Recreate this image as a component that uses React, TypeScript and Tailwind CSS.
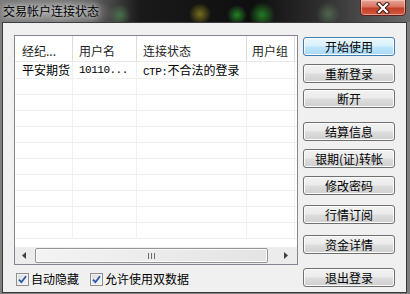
import React from "react";

const btnBase =
  "h-[19px] w-[92px] rounded-[3px] border flex items-center justify-center text-[12px] leading-[14px] text-black shadow-[inset_0_0_0_1px_#fbfbfb]";
const grayBtn =
  "border-[#707070] bg-[linear-gradient(#f2f2f2_0%,#ebebeb_48%,#dddddd_52%,#cfcfcf_100%)]";
const blueBtn =
  "border-[#3c7fb1] bg-[linear-gradient(#eaf6fd_0%,#d9f0fc_48%,#bee6fd_52%,#a7d9f5_100%)] shadow-[inset_0_0_0_1px_#c8e9fa]";

function Btn({ label, cls, primary }: { label: string; cls: string; primary?: boolean }) {
  return <div className={`${btnBase} ${primary ? blueBtn : grayBtn} ${cls}`}>{label}</div>;
}

function Check({ label, cls }: { label: string; cls: string }) {
  return (
    <div className={`flex items-center ${cls}`}>
      <div className="w-[13px] h-[13px] border border-[#8f8f8f] bg-[linear-gradient(135deg,#dcdcdc,#f6f6f6)] flex items-center justify-center shadow-[inset_0_0_0_1px_#f4f4f4]">
        <svg width="9" height="9" viewBox="0 0 9 9">
          <path d="M1 4.6 L3.4 7.2 L8 1.2" stroke="#2a55a8" strokeWidth="1.8" fill="none" />
        </svg>
      </div>
      <span className="ml-[2px] text-[12px] leading-[14px] text-black">{label}</span>
    </div>
  );
}

export default function App() {
  const rows = Array.from({ length: 10 });
  return (
    <div className="w-[410px] h-[294px] overflow-hidden bg-[#7e7e7e] flex flex-col font-['Noto_Sans_CJK_SC',sans-serif]">
      {/* title bar */}
      <div className="relative h-[22px] shrink-0 flex items-start bg-[radial-gradient(ellipse_60px_16px_at_55px_12px,rgba(190,190,190,0.55),transparent),radial-gradient(circle_at_120px_15px,rgba(90,160,90,0.55)_0,transparent_11px),radial-gradient(circle_at_200px_14px,rgba(150,140,30,0.75)_0,transparent_11px),radial-gradient(circle_at_237px_15px,rgba(40,150,40,0.85)_0,transparent_10px),radial-gradient(circle_at_262px_15px,rgba(40,140,40,0.85)_0,transparent_13px),radial-gradient(circle_at_328px_14px,rgba(110,150,110,0.5)_0,transparent_12px),linear-gradient(90deg,#7c7c7c_0%,#656565_22%,#1a1a1a_34%,#0e0e0e_62%,#2e2e2e_78%,#6a6a6a_100%)]">
        <span className="ml-[3px] mt-[4px] text-[12px] leading-[14px] text-black [text-shadow:0_0_4px_#ddd,0_0_8px_#ccc]">
          交易帐户连接状态
        </span>
        <div className="absolute right-[4px] top-[-1px] w-[46px] h-[17px] rounded-b-[4px] border border-[#5e2119] bg-[linear-gradient(#e9a799_0%,#d9735f_45%,#c2402a_55%,#d4583f_100%)] shadow-[inset_0_0_0_1px_rgba(255,220,210,0.5)] flex items-center justify-center">
          <svg width="14" height="12" viewBox="0 0 14 12">
            <path d="M3 2 L11 10 M11 2 L3 10" stroke="#3a1a14" strokeWidth="4.2" strokeLinecap="square" />
            <path d="M3 2 L11 10 M11 2 L3 10" stroke="#ffffff" strokeWidth="2.2" strokeLinecap="square" />
          </svg>
        </div>
      </div>

      {/* body */}
      <div className="ml-[2px] mr-[3px] h-[271px] shrink-0 border border-[#3a3a3a] bg-[#f0f0f0] flex pl-[11px] pt-[12px]">
        {/* left column */}
        <div className="flex flex-col w-[284px]">
          <div className="h-[230px] border border-[#828790] bg-white flex flex-col">
            {/* header */}
            <div className="h-[26px] flex border-b border-[#e8e8e8] text-[12px] leading-[14px] text-[#1e1e1e]">
              <div className="w-[58px] pl-[7px] pt-[8px] border-r border-[#dcdcdc]">经纪...</div>
              <div className="w-[64px] pl-[6px] pt-[8px] border-r border-[#dcdcdc]">用户名</div>
              <div className="w-[110px] pl-[6px] pt-[8px] border-r border-[#dcdcdc]">连接状态</div>
              <div className="w-[48px] pl-[5px] pt-[8px] border-r border-[#dcdcdc] whitespace-nowrap overflow-hidden">用户组</div>
            </div>
            {/* rows */}
            <div className="h-[17px] flex border-b border-[#f0f0f0] text-[12px] leading-[14px] text-black">
              <div className="w-[58px] pl-[7px] pt-[1px] border-r border-[#f0f0f0]">平安期货</div>
              <div className="w-[64px] pl-[6px] pt-[1px] border-r border-[#f0f0f0] font-['Liberation_Mono',monospace] text-[11px] tracking-[-0.5px]">10110...</div>
              <div className="w-[110px] pl-[6px] pt-[1px] border-r border-[#f0f0f0] whitespace-nowrap">
                <span className="font-['Liberation_Mono',monospace] text-[11px] tracking-[-0.5px]">CTP:</span>不合法的登录
              </div>
              <div className="w-[48px] border-r border-[#f0f0f0]"></div>
            </div>
            {rows.map((_, i) => (
              <div key={i} className="h-[16px] flex border-b border-[#f0f0f0]">
                <div className="w-[58px] border-r border-[#f0f0f0]"></div>
                <div className="w-[64px] border-r border-[#f0f0f0]"></div>
                <div className="w-[110px] border-r border-[#f0f0f0]"></div>
                <div className="w-[48px] border-r border-[#f0f0f0]"></div>
              </div>
            ))}
            <div className="flex-1"></div>
            {/* scrollbar */}
            <div className="h-[17px] flex items-center bg-[#ececec]">
              <div className="w-[18px] h-full flex items-center justify-center">
                <svg width="4" height="7" viewBox="0 0 4 7">
                  <path d="M4 0 L0 3.5 L4 7 Z" fill="#404040" />
                </svg>
              </div>
              <div className="ml-[2px] w-[233px] h-[15px] rounded-[2px] border border-[#959595] bg-[linear-gradient(90deg,#f3f3f3,#e4e4e4)] shadow-[inset_0_0_0_1px_#fafafa] flex items-center justify-center gap-[2px]">
                <div className="w-[1px] h-[6px] bg-[#6b6b6b]"></div>
                <div className="w-[1px] h-[6px] bg-[#6b6b6b]"></div>
                <div className="w-[1px] h-[6px] bg-[#6b6b6b]"></div>
              </div>
              <div className="flex-1 h-full flex items-center justify-end pr-[9px]">
                <svg width="4" height="7" viewBox="0 0 4 7">
                  <path d="M0 0 L4 3.5 L0 7 Z" fill="#404040" />
                </svg>
              </div>
            </div>
          </div>
          {/* checkboxes */}
          <div className="mt-[7px] flex items-center">
            <Check label="自动隐藏" cls="ml-[2px]" />
            <Check label="允许使用双数据" cls="ml-[11px]" />
          </div>
        </div>

        {/* buttons */}
        <div className="ml-[5px] pt-[2px] flex flex-col">
          <Btn label="开始使用" cls="" primary />
          <Btn label="重新登录" cls="mt-[8px]" />
          <Btn label="断开" cls="mt-[6px]" />
          <Btn label="结算信息" cls="mt-[14px]" />
          <Btn label="银期(证)转帐" cls="mt-[8px]" />
          <Btn label="修改密码" cls="mt-[8px]" />
          <Btn label="行情订阅" cls="mt-[10px]" />
          <Btn label="资金详情" cls="mt-[11px]" />
          <Btn label="退出登录" cls="mt-[14px]" />
        </div>
      </div>
    </div>
  );
}
